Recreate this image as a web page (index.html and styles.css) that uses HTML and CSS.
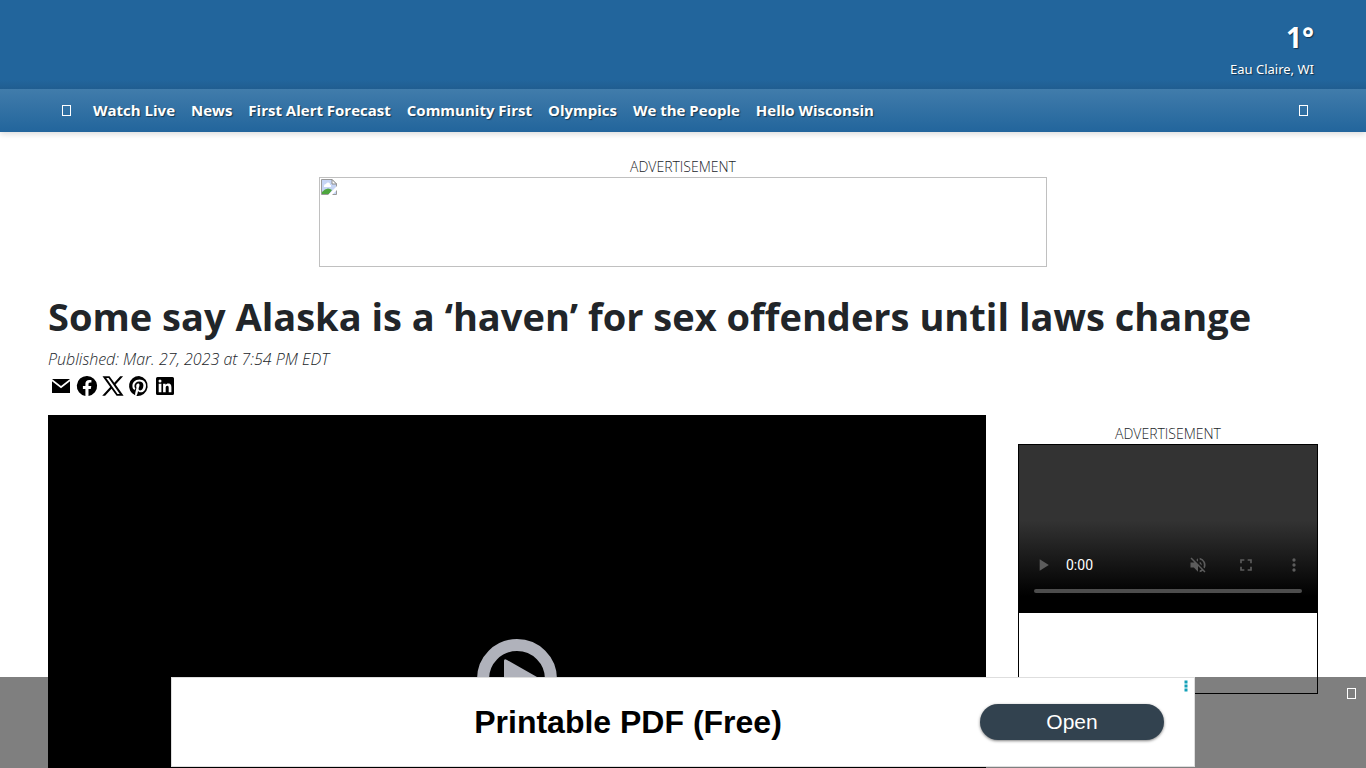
FILE: index.html
```html
<!DOCTYPE html>
<html lang="en">
<head>
  <meta charset="UTF-8" />
  <meta name="viewport" content="width=device-width, initial-scale=1.0" />
  <title>Some say Alaska is a ‘haven’ for sex offenders until laws change</title>
  <link rel="stylesheet" href="styles.css">
</head>
<body>
  <header>
    <div class="masthead">
      <a href="#" class="weather">
        <span class="temp">1°</span>
        <span class="city">Eau Claire, WI</span>
      </a>
    </div>
    <nav class="navbar">
      <button class="icon-btn" aria-label="Menu"><span class="glyph"></span></button>
      <ul class="nav-links">
        <li><a href="#">Watch Live</a></li>
        <li><a href="#">News</a></li>
        <li><a href="#">First Alert Forecast</a></li>
        <li><a href="#">Community First</a></li>
        <li><a href="#">Olympics</a></li>
        <li><a href="#">We the People</a></li>
        <li><a href="#">Hello Wisconsin</a></li>
      </ul>
      <button class="icon-btn search" aria-label="Search"><span class="glyph"></span></button>
    </nav>
  </header>

  <main>
    <div class="top-ad">
      <div class="ad-label">ADVERTISEMENT</div>
      <div class="banner">
        <svg width="16" height="16" viewBox="0 0 16 16">
          <path d="M0.5 0.5H11L15.5 5V15.5H0.5Z" fill="#c6d5f5" stroke="#9a9a9a"/>
          <path d="M11 0.5V5H15.5Z" fill="#fff" stroke="#8c8c8c"/>
          <path d="M3 7a2 2 0 0 1 2-2 2 2 0 0 1 4 1h1v2H3Z" fill="#fff"/>
          <path d="M1 15V13Q6 7 11 11L8 15Z" fill="#4ea63e"/>
          <path d="M7 16L16 7V11L11 16Z" fill="#fff"/>
        </svg>
      </div>
    </div>

    <h1>Some say Alaska is a ‘haven’ for sex offenders until laws change</h1>
    <p class="published">Published: Mar. 27, 2023 at 7:54 PM EDT</p>
    <div class="share">
      <a href="#" aria-label="Email">
        <svg viewBox="0 0 24 24"><path d="M3 5H21L12 12Z"/><path d="M3 7.2L12 14.2L21 7.2V19H3Z"/></svg>
      </a>
      <a href="#" aria-label="Facebook">
        <svg viewBox="0 0 24 24"><path d="M12 2a10 10 0 0 0-1.6 19.9v-7H7.9V12h2.5V9.8c0-2.5 1.5-3.9 3.8-3.9 1.1 0 2.2.2 2.2.2v2.5h-1.3c-1.2 0-1.6.8-1.6 1.6V12h2.8l-.5 2.9h-2.3v7A10 10 0 0 0 12 2Z"/></svg>
      </a>
      <a href="#" aria-label="X">
        <svg viewBox="0 0 24 24"><path fill-rule="evenodd" d="M1.500 2.200h7l4.800 6.500 5.900-6.500h2.900l-7.500 8.400 8 11.200h-7l-5.100-7.100-6.400 7.100H1.200l8-8.900ZM5.200 4.100l11.300 15.800h2.300L7.600 4.100Z"/></svg>
      </a>
      <a href="#" aria-label="Pinterest">
        <svg viewBox="0 0 24 24"><path d="M12 2a10 10 0 0 0-3.900 19.200c0-.7 0-1.800.2-2.500l1.200-5s-.3-.7-.3-1.600c0-1.500.9-2.600 1.900-2.600.9 0 1.400.7 1.400 1.500 0 .9-.6 2.300-.9 3.500-.3 1.100.5 1.900 1.600 1.900 1.900 0 3.200-2.400 3.200-5.200 0-2.200-1.500-3.800-4.100-3.800a4.700 4.700 0 0 0-4.900 4.700c0 .9.3 1.500.7 2 .2.2.2.3.1.6l-.2.8c-.1.3-.3.400-.5.300-1.400-.6-2.100-2.100-2.100-3.900 0-2.900 2.400-6.300 7.200-6.300 3.900 0 6.400 2.800 6.400 5.800 0 4-2.200 6.900-5.400 6.900-1.100 0-2.100-.6-2.500-1.300l-.7 2.700c-.2.8-.7 1.600-1.100 2.200A10 10 0 1 0 12 2Z"/></svg>
      </a>
      <a href="#" aria-label="LinkedIn">
        <svg viewBox="0 0 24 24"><path fill-rule="evenodd" d="M4.500 3h15A1.500 1.500 0 0 1 21 4.500v15a1.500 1.500 0 0 1-1.500 1.500h-15A1.500 1.500 0 0 1 3 19.500v-15A1.500 1.500 0 0 1 4.500 3ZM5.700 9.700h2.700v8.600H5.700ZM7 5.500a1.500 1.500 0 1 0 0 3 1.500 1.500 0 0 0 0-3ZM10.100 9.700h2.500v1.200c.4-.7 1.300-1.400 2.600-1.400 2.700 0 3.200 1.800 3.200 4.100v4.700h-2.700v-4.200c0-1 0-2.300-1.400-2.300s-1.600 1.100-1.600 2.200v4.300h-2.600Z"/></svg>
      </a>
    </div>

    <div class="columns">
      <div class="video">
        <button class="play" aria-label="Play video">
          <svg viewBox="0 0 80 80"><circle cx="40" cy="40" r="34" fill="none" stroke="#b0b2bb" stroke-width="12"/><path d="M27 22q0-3 3-1l30 17q3 2 0 4L30 60q-3 1-3-2Z" fill="#b0b2bb"/></svg>
        </button>
      </div>
      <aside>
        <div class="ad-label">ADVERTISEMENT</div>
        <div class="side-ad">
          <div class="player">
            <div class="controls">
              <button class="ctl" aria-label="Play"><svg viewBox="0 0 24 24"><path d="M8 5v14l11-7Z"/></svg></button>
              <span class="time">0:00</span>
              <button class="ctl" aria-label="Unmute"><svg viewBox="0 0 24 24"><path d="M16.500 12c0-1.800-1-3.300-2.500-4v2.200l2.500 2.500Zm2.500 0c0 .9-.2 1.800-.5 2.600l1.500 1.500a9 9 0 0 0-6-12.900v2.100A7 7 0 0 1 19 12ZM4.300 3 3 4.300 7.700 9H3v6h4l5 5v-6.700l4.300 4.200a7 7 0 0 1-2.300 1.200v2.100a9 9 0 0 0 3.700-1.800l2 2 1.300-1.300ZM12 4 9.900 6.100 12 8.200Z"/></svg></button>
              <button class="ctl" aria-label="Full screen"><svg viewBox="0 0 24 24"><path d="M7 14H5v5h5v-2H7ZM5 10h2V7h3V5H5ZM17 17h-3v2h5v-5h-2ZM14 5v2h3v3h2V5Z"/></svg></button>
              <button class="ctl" aria-label="More"><svg viewBox="0 0 24 24"><circle cx="12" cy="6" r="2"/><circle cx="12" cy="12" r="2"/><circle cx="12" cy="18" r="2"/></svg></button>
            </div>
            <div class="timeline"></div>
          </div>
        </div>
      </aside>
    </div>
  </main>

  <div class="bottom-ad">
    <div class="ad-frame">
      <strong>Printable PDF (Free)</strong>
      <button class="open-btn">Open</button>
      <svg class="ad-dots" viewBox="0 0 4 12"><path d="M0.500 0.500h3v3h-3ZM0.500 4.500h3v3h-3ZM0.500 8.500h3v3h-3Z" fill="#12a0b8"/></svg>
    </div>
    <button class="close-btn" aria-label="Close"><span class="glyph"></span></button>
  </div>
</body>
</html>
```
FILE: styles.css
```css
* {
  box-sizing: border-box;
}
body {
  margin: 0;
  font-family: 'Segoe UI', 'Open Sans', sans-serif;
  color: #212529;
  background-color: #fff;
}
a {
  color: inherit;
  text-decoration: none;
}
button {
  padding: 0;
  border: none;
  background: none;
  cursor: pointer;
}
header {
  color: #fff;
  background-color: #22659c;
  text-shadow: 1px 1px 1px rgba(0, 0, 0, 0.5);
  box-shadow: 0 2px 6px rgba(0, 0, 0, 0.15);
}
.masthead {
  display: flex;
  justify-content: flex-end;
  height: 89px;
  padding: 17px 52px 0;
  background: linear-gradient(#22659c 80px, #205d90);
}
.weather {
  display: flex;
  flex-direction: column;
  align-items: flex-end;
}
.temp {
  font-size: 28px;
  line-height: 40px;
  font-weight: bold;
}
.city {
  font-family: 'Segoe UI', 'Noto Sans', sans-serif;
  font-size: 13px;
  line-height: 24px;
}
.navbar {
  display: flex;
  align-items: center;
  height: 43px;
  padding: 0 48px;
  background: linear-gradient(#417cab, #22659c);
}
.icon-btn {
  display: flex;
  justify-content: center;
  width: 36px;
}
.search {
  width: 30px;
  margin-left: auto;
}
.glyph {
  display: block;
  width: 9px;
  height: 11px;
  border: 1px solid #fff;
}
.nav-links {
  display: flex;
  gap: 16px;
  margin: 0 0 0 9px;
  padding: 0 0 2px;
  list-style: none;
  font-size: 15px;
  font-weight: bold;
  white-space: nowrap;
}
main {
  padding: 24px 48px 0;
}
.ad-label {
  font-size: 14px;
  line-height: 21px;
  font-weight: 300;
  text-align: center;
}
.banner {
  max-width: 728px;
  height: 90px;
  margin: 0 auto;
  padding: 1px;
  border: 1px solid #c0c0c0;
}
.banner svg {
  display: block;
}
h1 {
  margin: 25px 0 0;
  font-size: 38px;
  line-height: 48px;
}
.published {
  margin: 7px 0 0;
  font-size: 16px;
  line-height: 24px;
  font-style: italic;
  font-weight: 300;
}
.share {
  display: flex;
  gap: 2px;
  padding: 3px 1px 0;
}
.share svg {
  display: block;
  width: 24px;
  height: 24px;
}
.columns {
  display: flex;
  align-items: flex-start;
  gap: 32px;
  margin-top: 17px;
}
.video {
  display: flex;
  align-items: center;
  justify-content: center;
  flex: 1;
  aspect-ratio: 16 / 9;
  background-color: #000;
}
.play {
  width: 80px;
  height: 80px;
}
aside {
  width: 300px;
  padding-top: 8px;
}
.side-ad {
  height: 250px;
  border: 1px solid #000;
}
.player {
  display: flex;
  flex-direction: column;
  justify-content: flex-end;
  height: 168px;
  padding: 0 14px 20px;
  background: linear-gradient(#333 45%, #000 90%);
}
.controls {
  display: flex;
  align-items: center;
  gap: 28px;
  margin-bottom: 14px;
}
.ctl {
  width: 20px;
  height: 20px;
}
.ctl svg {
  display: block;
  width: 20px;
  height: 20px;
  fill: #5c5c5c;
}
.ctl:last-child {
  margin-right: -1px;
}
.time {
  flex: 1;
  margin-left: -15px;
  font-family: Roboto, sans-serif;
  font-size: 14px;
  color: #fff;
}
.timeline {
  height: 4px;
  margin: 0 1px;
  border-radius: 2px;
  background-color: #4d4d4d;
}
.bottom-ad {
  position: fixed;
  bottom: 0;
  left: 0;
  right: 0;
  display: flex;
  justify-content: center;
  height: 91px;
  background-color: rgba(0, 0, 0, 0.5);
}
.ad-frame {
  position: relative;
  display: flex;
  align-items: center;
  justify-content: flex-end;
  width: 1024px;
  height: 90px;
  padding-right: 30px;
  border: 1px solid #dedede;
  background-color: #fff;
  font-family: 'Liberation Sans', Arial, sans-serif;
}
.ad-frame strong {
  flex: 1;
  padding-left: 104px;
  font-size: 32px;
  color: #000;
  text-align: center;
}
.open-btn {
  width: 184px;
  height: 36px;
  border-radius: 18px;
  background-color: #32424f;
  box-shadow: 0 1px 3px rgba(0, 0, 0, 0.5);
  font-family: inherit;
  font-size: 21px;
  color: #fff;
}
.ad-dots {
  position: absolute;
  top: 2px;
  right: 6px;
  width: 4px;
  height: 12px;
}
.close-btn {
  position: absolute;
  top: 11px;
  right: 10px;
}
```
